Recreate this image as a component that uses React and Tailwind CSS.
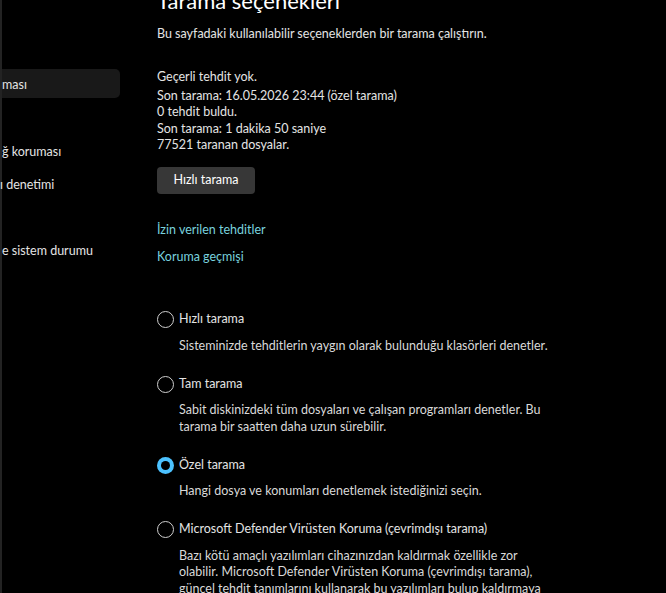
import React, { useState } from 'react';

const sidebarItems = [
  { id: 'virus', label: 'ması', active: true, className: 'mt-[69px]' },
  { id: 'firewall', label: 'ğ koruması', className: 'mt-[38px]' },
  { id: 'app', label: 'ı denetimi', className: 'mt-[4px] -ml-[2px]' },
  { id: 'device', label: 'e sistem durumu', className: 'mt-[37px]' },
];

const scanOptions = [
  {
    id: 'quick',
    label: 'Hızlı tarama',
    description: 'Sisteminizde tehditlerin yaygın olarak bulunduğu klasörleri denetler.',
  },
  {
    id: 'full',
    label: 'Tam tarama',
    description:
      'Sabit diskinizdeki tüm dosyaları ve çalışan programları denetler. Bu tarama bir saatten daha uzun sürebilir.',
  },
  {
    id: 'custom',
    label: 'Özel tarama',
    description: 'Hangi dosya ve konumları denetlemek istediğinizi seçin.',
  },
  {
    id: 'offline',
    label: 'Microsoft Defender Virüsten Koruma (çevrimdışı tarama)',
    description:
      'Bazı kötü amaçlı yazılımları cihazınızdan kaldırmak özellikle zor olabilir. Microsoft Defender Virüsten Koruma (çevrimdışı tarama), güncel tehdit tanımlarını kullanarak bu yazılımları bulup kaldırmaya yardımcı olabilir. Bu işlem cihazınızı yeniden başlatır ve yaklaşık 15 dakika sürer.',
  },
];

function Radio({ checked }) {
  if (checked) {
    return (
      <span className="flex h-[17px] w-[17px] shrink-0 items-center justify-center rounded-full bg-[#4cc2ff]">
        <span className="h-[9px] w-[9px] rounded-full bg-black" />
      </span>
    );
  }
  return <span className="h-[17px] w-[17px] shrink-0 rounded-full border border-[#cfcfcf]" />;
}

export default function App() {
  const [selected, setSelected] = useState('custom');

  return (
    <div
      className="flex h-[593px] w-[666px] overflow-hidden bg-black text-[12.5px] text-[#e4e4e4]"
      style={{ fontFamily: 'Lato, "Noto Sans", sans-serif' }}
    >
      {/* sidebar, scrolled off to the left */}
      <aside className="flex w-[120px] shrink-0 flex-col border-l-2 border-[#232323]">
        {sidebarItems.map((item) => (
          <div
            key={item.id}
            className={`flex h-[29px] items-center whitespace-nowrap rounded-r-[5px] pt-[3px] ${item.className} ${
              item.active ? 'bg-[#191919]' : ''
            }`}
          >
            {item.label}
          </div>
        ))}
      </aside>

      <main className="flex flex-col items-start pl-[37px]">
        <h1 className="-mt-[13px] text-[22px] font-normal leading-[28px] text-white">Tarama seçenekleri</h1>
        <p className="mt-[10px] leading-[18px]">Bu sayfadaki kullanılabilir seçeneklerden bir tarama çalıştırın.</p>

        <div className="mt-[26px] leading-[16.5px]">
          <p className="mb-[2px]">Geçerli tehdit yok.</p>
          <p>Son tarama: 16.05.2026 23:44 (özel tarama)</p>
          <p>0 tehdit buldu.</p>
          <p>Son tarama: 1 dakika 50 saniye</p>
          <p>77521 taranan dosyalar.</p>
        </div>

        <button className="mt-[13px] flex h-[27px] w-[98px] shrink-0 items-center justify-center rounded-[4px] bg-[#373737] text-white">
          Hızlı tarama
        </button>

        <a className="mt-[27px] leading-[18px] text-[#79d2de]">İzin verilen tehditler</a>
        <a className="mt-[9px] leading-[18px] text-[#79d2de]">Koruma geçmişi</a>

        <div className="mt-[45px] flex flex-col">
          {scanOptions.map((opt, i) => (
            <div key={opt.id} className={i === 0 ? '' : 'mt-[21px]'}>
              <label
                className="flex h-[18px] cursor-pointer items-center gap-[5px]"
                onClick={() => setSelected(opt.id)}
              >
                <Radio checked={selected === opt.id} />
                <span>{opt.label}</span>
              </label>
              <p className="mt-[9px] w-[393px] pl-[22px] leading-[16.5px] text-[#d9d9d9]">{opt.description}</p>
            </div>
          ))}
        </div>
      </main>
    </div>
  );
}
